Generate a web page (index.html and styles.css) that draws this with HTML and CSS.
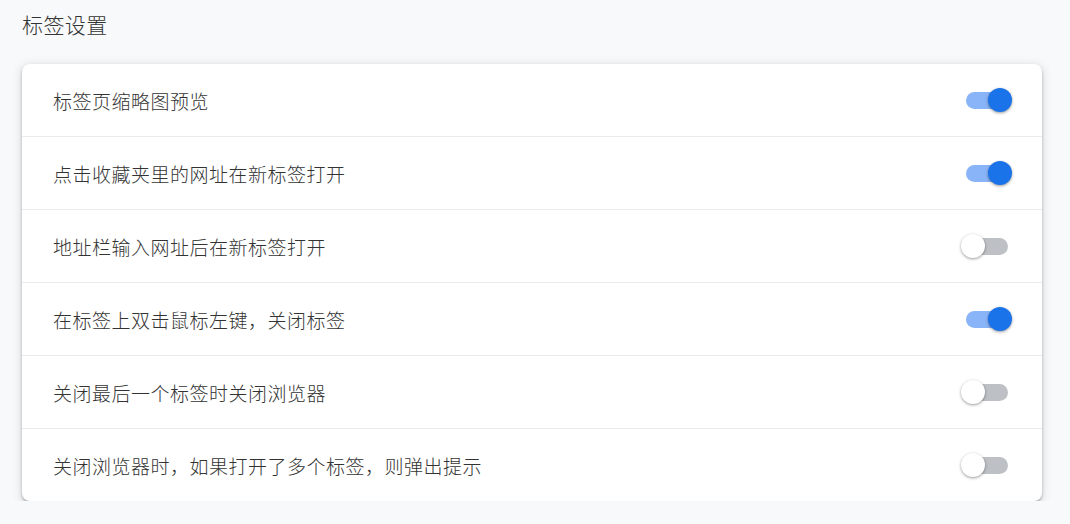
FILE: index.html
```html
<!DOCTYPE html>
<html lang="zh">
<head>
<meta charset="utf-8">
<title>标签设置</title>
<link rel="stylesheet" href="styles.css">
</head>
<body>
<div class="page">
  <h1 class="title">标签设置</h1>
  <div class="card">
    <div class="row"><span class="label">标签页缩略图预览</span><span class="toggle on"><span class="knob"></span></span></div>
    <div class="row"><span class="label">点击收藏夹里的网址在新标签打开</span><span class="toggle on"><span class="knob"></span></span></div>
    <div class="row"><span class="label">地址栏输入网址后在新标签打开</span><span class="toggle"><span class="knob"></span></span></div>
    <div class="row"><span class="label">在标签上双击鼠标左键，关闭标签</span><span class="toggle on"><span class="knob"></span></span></div>
    <div class="row"><span class="label">关闭最后一个标签时关闭浏览器</span><span class="toggle"><span class="knob"></span></span></div>
    <div class="row"><span class="label">关闭浏览器时，如果打开了多个标签，则弹出提示</span><span class="toggle"><span class="knob"></span></span></div>
  </div>
</div>
</body>
</html>
```

FILE: styles.css
```css
html, body {
  margin: 0;
  padding: 0;
  background: #f8f9fa;
  font-family: "Noto Sans CJK SC", "Noto Sans", sans-serif;
  color: #333;
}
.page {
  padding: 10px 28px 0 22px;
}
.title {
  margin: 0;
  font-size: 21px;
  font-weight: 300;
  letter-spacing: 0.4px;
  line-height: 28px;
  color: #333;
}
.card {
  margin-top: 26px;
  background: #fff;
  border-radius: 8px;
  box-shadow: 0 2px 3px rgba(60, 64, 67, 0.35), 0 2px 8px 2px rgba(60, 64, 67, 0.12);
  overflow: hidden;
}
.row {
  height: 72px;
  display: flex;
  align-items: center;
  justify-content: space-between;
  padding: 0 34px 0 31px;
  border-top: 1px solid #ebebeb;
}
.row:first-child {
  border-top: none;
}
.label {
  font-size: 19px;
  font-weight: 300;
  letter-spacing: 0.5px;
  color: #333;
}
.toggle {
  position: relative;
  width: 42px;
  height: 17px;
  border-radius: 9px;
  background: #bdc1c6;
}
.toggle .knob {
  position: absolute;
  top: -3.5px;
  left: -5px;
  width: 24px;
  height: 24px;
  border-radius: 50%;
  background: #fff;
  box-shadow: 0 1px 3px rgba(0, 0, 0, 0.4);
}
.toggle.on {
  background: #8ab4f8;
}
.toggle.on .knob {
  left: 22px;
  background: #1a73e8;
}
```
